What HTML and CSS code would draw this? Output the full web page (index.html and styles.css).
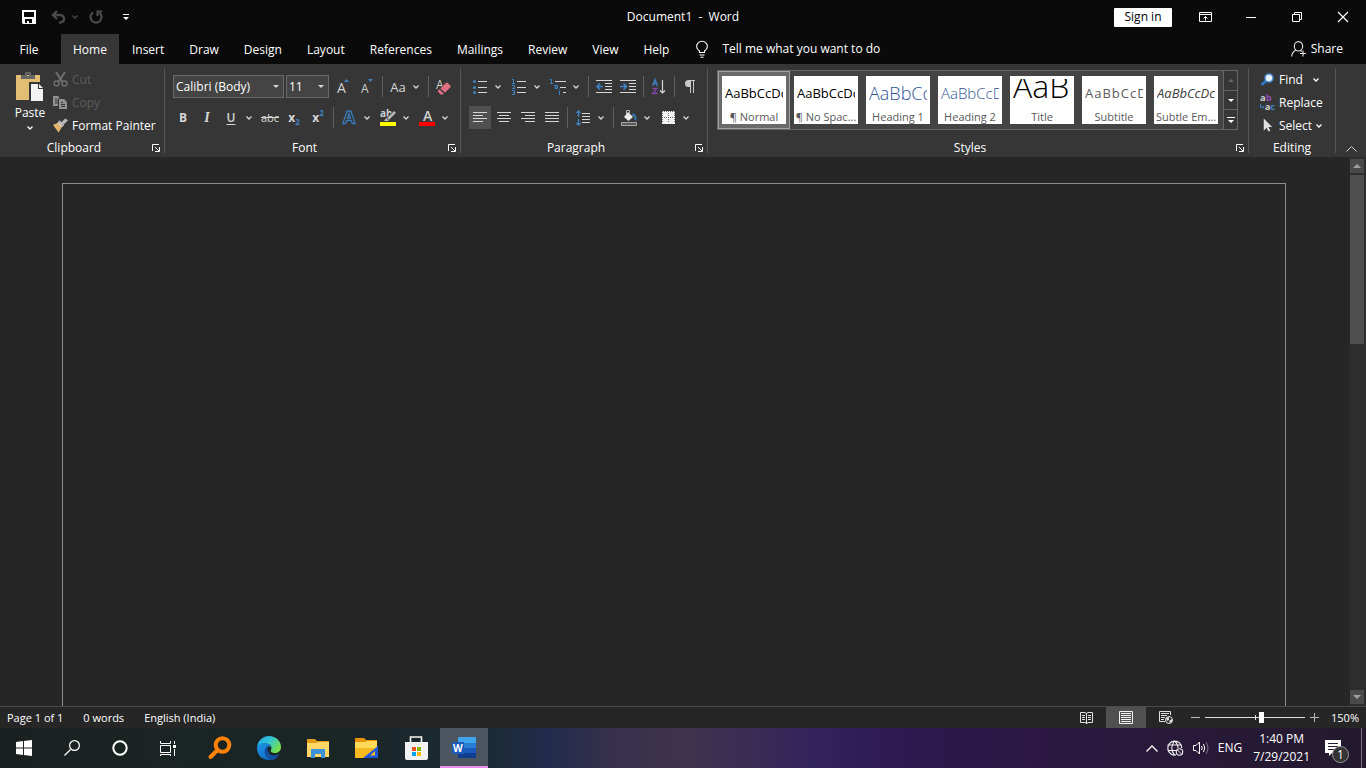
FILE: index.html
```
<!DOCTYPE html>
<html lang="en">
<head>
    <meta charset="UTF-8">
    <meta name="viewport" content="width=device-width, initial-scale=1.0">
    <title>Document1 - Word</title>
    <link rel="stylesheet" href="styles.css">
</head>
<body>

<!-- shared icons -->
<svg class="sprite" aria-hidden="true">
    <symbol id="chevron" viewBox="0 0 6 4"><path d="M0.5 0.5L3 3L5.5 0.5" fill="none" stroke="currentColor" stroke-width="1.3"/></symbol>
    <symbol id="launcher" viewBox="0 0 8 8"><path d="M0.5 7V0.5H7M3 3L7 7M7.5 3V7.5H3" fill="none" stroke="currentColor"/></symbol>
</svg>

<header class="title-bar">
    <div class="quick-access">
        <button class="qa-save" aria-label="Save">
            <svg width="14" height="14" viewBox="0 0 14 14"><path fill="#fff" fill-rule="evenodd" d="M0 0H14V14H1L0 13ZM2 2V7H12V2ZM3 9V13H5V11H7V13H10V9Z"/></svg>
        </button>
        <button class="qa-undo dim" aria-label="Undo">
            <svg width="15" height="14" viewBox="0 0 15 14"><path d="M6 1L2 5L6 9M2 5H9Q13 5 13 9Q13 12.500 8 12.500" fill="none" stroke="currentColor" stroke-width="2.400"/></svg>
        </button>
        <button class="qa-drop dim" aria-label="Undo history"><svg width="6" height="4"><use href="#chevron"/></svg></button>
        <button class="qa-redo dim" aria-label="Repeat">
            <svg width="14" height="14" viewBox="0 0 14 14"><path d="M4 2.500A5.500 5.500 0 1 0 10.500 2.800M13 1.500H8.500V6" fill="none" stroke="currentColor" stroke-width="2.200"/></svg>
        </button>
        <button class="qa-more" aria-label="Customize Quick Access Toolbar">
            <svg width="6" height="6" viewBox="0 0 6 6"><path fill="#fff" d="M0 0H6V1H0ZM0 3H6L3 6Z"/></svg>
        </button>
    </div>
    <div class="doc-title">Document1&nbsp; -&nbsp; Word</div>
    <div class="window-tools">
        <button class="sign-in">Sign in</button>
        <button class="win-btn" aria-label="Ribbon Display Options">
            <svg width="13" height="10" viewBox="0 0 13 10"><path d="M0.500 0.500H12.500V9.500H0.500ZM0.500 2.500H12.500M6.500 8.500V4.500M4.500 6.500L6.500 4.500L8.500 6.500" fill="none" stroke="#fff"/></svg>
        </button>
        <button class="win-btn" aria-label="Minimize">
            <svg width="10" height="10" viewBox="0 0 10 10"><path d="M0 5.500H10" stroke="#fff"/></svg>
        </button>
        <button class="win-btn" aria-label="Restore Down">
            <svg width="10" height="10" viewBox="0 0 10 10"><path d="M0.500 2.500H7.500V9.500H0.500ZM2.500 2V0.500H9.500V7.500H8" fill="none" stroke="#fff"/></svg>
        </button>
        <button class="win-btn" aria-label="Close">
            <svg width="10" height="10" viewBox="0 0 10 10"><path d="M0 0L10 10M10 0L0 10" stroke="#fff" stroke-width="1.200"/></svg>
        </button>
    </div>
</header>

<nav class="tabs">
    <button class="tab file">File</button>
    <button class="tab active">Home</button>
    <button class="tab">Insert</button>
    <button class="tab">Draw</button>
    <button class="tab">Design</button>
    <button class="tab">Layout</button>
    <button class="tab">References</button>
    <button class="tab">Mailings</button>
    <button class="tab">Review</button>
    <button class="tab">View</button>
    <button class="tab">Help</button>
    <button class="tell-me">
        <svg width="12" height="17" viewBox="0 0 12 17"><path d="M3.500 11.500V10Q0.600 8 0.600 5.500A5.200 5 0 0 1 11.400 5.500Q11.400 8 8.500 10V11.500ZM3.500 14H8.500M4.500 16.200H7.500" fill="none" stroke="#fff" stroke-width="1.100"/></svg>
        Tell me what you want to do
    </button>
    <button class="share">
        <svg width="16" height="16" viewBox="0 0 16 16"><path d="M7.500 0.600A4.200 4.700 0 0 1 7.500 10A4.200 4.700 0 0 1 7.500 0.600M5 9Q1 11 0.600 15.500M9.500 9.500L10.500 10.500M12 9.500V15.500M9 12.500H15" fill="none" stroke="#e8e8e8" stroke-width="1.100"/></svg>
        Share
    </button>
</nav>

<section class="ribbon">
    <div class="group clipboard">
        <div class="group-body">
            <button class="paste">
                <svg width="28" height="30" viewBox="0 0 28 30">
                    <path fill="#e2bd74" d="M0 3H24V28H0Z"/>
                    <path fill="#666" d="M5 3H9V1Q9 0 10 0H14Q15 0 15 1V3H19V7H5ZM11 2V4H13V2Z"/>
                    <path fill="#363636" d="M13 10H24L28 14V30H13Z"/>
                    <path fill="#f2f2f2" d="M15 12H22V17H27V29H15ZM23 12L27 16H23Z"/>
                </svg>
                Paste
                <svg width="6" height="4"><use href="#chevron"/></svg>
            </button>
            <div class="command-list">
                <button class="command" disabled>
                    <svg width="15" height="15" viewBox="0 0 15 15"><path d="M3 0L9.500 10M12 0L5.500 10" stroke="#707070" stroke-width="2"/><circle cx="3.500" cy="11.500" r="2.500" fill="none" stroke="#707070" stroke-width="1.400"/><circle cx="11.500" cy="11.500" r="2.500" fill="none" stroke="#707070" stroke-width="1.400"/></svg>
                    Cut
                </button>
                <button class="command" disabled>
                    <svg width="15" height="15" viewBox="0 0 15 15"><path fill="#909090" d="M0 1H5L8 4V11H0Z"/><path d="M2 4H4M2 6H5M2 8H5" stroke="#363636"/><path fill="#909090" stroke="#363636" d="M5.500 3.500H11L14.500 7V14.500H5.500Z"/><path d="M8 7.500H10M8 9.500H12M8 11.500H12" stroke="#363636"/></svg>
                    Copy
                </button>
                <button class="command">
                    <svg width="15" height="15" viewBox="0 0 16 15"><path fill="#e2b46c" d="M0 7L4 5L9 10L6 15Z"/><path fill="#f6dcae" d="M4 5L6 4L10 8L9 10Z"/><path fill="#b8b8b8" d="M5 4L7 2L12 7L10 9ZM9 4L13 0L16 2L11 7Z"/></svg>
                    Format Painter
                </button>
            </div>
        </div>
        <div class="group-label"><span>Clipboard</span><button class="launch" aria-label="Clipboard settings"><svg width="8" height="8"><use href="#launcher"/></svg></button></div>
    </div>

    <div class="group">
        <div class="group-body rows">
            <div class="row">
                <select class="font-name" aria-label="Font"><option>Calibri (Body)</option></select>
                <select class="font-size" aria-label="Font size"><option>11</option></select>
                <button class="btn" aria-label="Increase font size"><svg width="14" height="15" viewBox="0 0 14 15"><text x="1" y="14" class="glyph g14">A</text><path fill="#3e83c6" d="M8 3L10.500 0L13 3Z"/></svg></button>
                <button class="btn" aria-label="Decrease font size"><svg width="14" height="15" viewBox="0 0 14 15"><text x="1" y="14" class="glyph g12">A</text><path fill="#3e83c6" d="M8 0H13L10.500 3Z"/></svg></button>
                <i class="sep"></i>
                <button class="btn case" aria-label="Change case">Aa</button>
                <button class="drop" aria-label="Case options"><svg width="6" height="4"><use href="#chevron"/></svg></button>
                <i class="sep"></i>
                <button class="btn" aria-label="Clear formatting"><svg width="16" height="16" viewBox="0 0 16 16"><text x="0" y="10" class="glyph g12">A</text><path fill="#de6f83" stroke="#363636" stroke-width="0.600" d="M4 9.500L10 3.500L11 3L15 7V8L9 14Z"/><path fill="#de6f83" d="M1.500 12L3.300 10.300L7.800 14.800L7 15.500H4.500Z"/></svg></button>
            </div>
            <div class="row">
                <button class="btn bold" aria-label="Bold">B</button>
                <button class="btn italic" aria-label="Italic">I</button>
                <button class="btn underline" aria-label="Underline">U</button>
                <button class="drop" aria-label="Underline style"><svg width="6" height="4"><use href="#chevron"/></svg></button>
                <button class="btn strike" aria-label="Strikethrough">abc</button>
                <button class="btn script" aria-label="Subscript">x<sub>2</sub></button>
                <button class="btn script" aria-label="Superscript">x<sup>2</sup></button>
                <i class="sep"></i>
                <button class="btn" aria-label="Text effects"><svg width="14" height="15" viewBox="0 0 14 15"><path d="M0.800 13.500L5.200 1H8.800L13.200 13.500H10.300L9.200 10.500H4.800L3.700 13.500ZM5.500 8H8.500L7 3.500Z" fill="none" stroke="#3778b8" stroke-width="1.300"/></svg></button>
                <button class="drop" aria-label="Effects"><svg width="6" height="4"><use href="#chevron"/></svg></button>
                <button class="btn" aria-label="Text highlight colour"><svg width="16" height="16" viewBox="0 0 16 16"><text x="0" y="7" class="glyph g10 heavy">ab</text><path stroke="#363636" stroke-width="4" d="M15 2L8 9"/><path stroke="#b8b8b8" stroke-width="2.500" d="M15 2L8 9"/><path fill="#b8b8b8" d="M6 8L9 11H4Z"/><path fill="#ff0" d="M0 12H16V16H0Z"/></svg></button>
                <button class="drop" aria-label="Highlight colours"><svg width="6" height="4"><use href="#chevron"/></svg></button>
                <button class="btn" aria-label="Font colour"><svg width="16" height="16" viewBox="0 0 16 16"><text x="4" y="11" class="glyph g14 semi">A</text><path fill="#f00" d="M0 12H16V16H0Z"/></svg></button>
                <button class="drop" aria-label="Font colours"><svg width="6" height="4"><use href="#chevron"/></svg></button>
            </div>
        </div>
        <div class="group-label"><span>Font</span><button class="launch" aria-label="Font settings"><svg width="8" height="8"><use href="#launcher"/></svg></button></div>
    </div>

    <div class="group paragraph">
        <div class="group-body rows">
            <div class="row">
                <button class="btn" aria-label="Bullets"><svg width="14" height="15" viewBox="0 0 14 15"><path d="M5 2.500H14M5 8.500H14M5 13.500H14" stroke="#d6d6d6"/><g fill="#3e83c6"><circle cx="1.500" cy="2.500" r="1.500"/><circle cx="1.500" cy="8.500" r="1.500"/><circle cx="1.500" cy="13.500" r="1.500"/></g></svg></button>
                <button class="drop" aria-label="Bullet styles"><svg width="6" height="4"><use href="#chevron"/></svg></button>
                <button class="btn" aria-label="Numbering"><svg width="14" height="16" viewBox="0 0 14 16"><path d="M5 2.500H14M5 8.500H14M5 13.500H14" stroke="#d6d6d6"/><path d="M0 0.500H1.500V4M0 4.500H3M0 6.500H2.500V8L0.500 9.500H3M0 11.500H2.500V15.500H0M1 13.500H2.500" fill="none" stroke="#3e83c6"/></svg></button>
                <button class="drop" aria-label="Number styles"><svg width="6" height="4"><use href="#chevron"/></svg></button>
                <button class="btn" aria-label="Multilevel list"><svg width="16" height="16" viewBox="0 0 16 16"><path d="M5 2.500H16M10 8.500H16M13 13.500H16" stroke="#d6d6d6"/><path d="M0 0.500H1.500V4M0 4.500H3M4 6.500H7.500V9.500H5V8H7M9.500 10V11M8.500 12.500H9.500V16" fill="none" stroke="#3e83c6"/></svg></button>
                <button class="drop" aria-label="Multilevel styles"><svg width="6" height="4"><use href="#chevron"/></svg></button>
                <i class="sep"></i>
                <button class="btn" aria-label="Decrease indent"><svg width="16" height="13" viewBox="0 0 16 13"><path d="M0 0.500H16M9 3.500H16M9 6.500H16M9 9.500H16M0 12.500H16" stroke="#d6d6d6"/><path d="M1 6.500H7M4 3.500L1 6.500L4 9.500" fill="none" stroke="#3e83c6" stroke-width="1.600"/></svg></button>
                <button class="btn" aria-label="Increase indent"><svg width="16" height="13" viewBox="0 0 16 13"><path d="M0 0.500H16M9 3.500H16M9 6.500H16M9 9.500H16M0 12.500H16" stroke="#d6d6d6"/><path d="M0 6.500H6M3.500 3.500L6.500 6.500L3.500 9.500" fill="none" stroke="#3e83c6" stroke-width="1.600"/></svg></button>
                <i class="sep"></i>
                <button class="btn" aria-label="Sort"><svg width="14" height="16" viewBox="0 0 14 16"><path d="M0.500 7L3 0.500L5.500 7M1.500 4.500H4.500" fill="none" stroke="#3e83c6" stroke-width="1.300"/><path d="M0.500 9.500H5L0.700 14.500H5.500" fill="none" stroke="#8445a8" stroke-width="1.300"/><path d="M10.500 1V14M8 11.500L10.500 14L13 11.500" fill="none" stroke="#d6d6d6" stroke-width="1.200"/></svg></button>
                <i class="sep"></i>
                <button class="btn" aria-label="Show paragraph marks"><svg width="10" height="13" viewBox="0 0 10 13"><path fill="#c8c8c8" d="M3.500 0H10V1H9V13H8V1H6V13H5V7H3.500A3.500 3.500 0 0 1 3.500 0Z"/></svg></button>
            </div>
            <div class="row">
                <button class="btn on" aria-label="Align left"><svg width="14" height="11" viewBox="0 0 14 11"><path d="M0 0.500H14M0 3.500H10M0 6.500H14M0 9.500H10" stroke="#d6d6d6"/></svg></button>
                <button class="btn" aria-label="Centre"><svg width="14" height="11" viewBox="0 0 14 11"><path d="M0 0.500H14M2 3.500H12M0 6.500H14M2 9.500H12" stroke="#d6d6d6"/></svg></button>
                <button class="btn" aria-label="Align right"><svg width="14" height="11" viewBox="0 0 14 11"><path d="M0 0.500H14M4 3.500H14M0 6.500H14M4 9.500H14" stroke="#d6d6d6"/></svg></button>
                <button class="btn" aria-label="Justify"><svg width="14" height="11" viewBox="0 0 14 11"><path d="M0 0.500H14M0 3.500H14M0 6.500H14M0 9.500H14" stroke="#d6d6d6"/></svg></button>
                <i class="sep"></i>
                <button class="btn" aria-label="Line spacing"><svg width="14" height="16" viewBox="0 0 14 16"><path d="M2.500 1V7M0.500 3L2.500 1L4.500 3M2.500 9V15M0.500 13L2.500 15L4.500 13" fill="none" stroke="#3e83c6" stroke-width="1.400"/><path d="M6 3.500H14M6 6.500H14M6 9.500H14M6 12.500H14" stroke="#d6d6d6"/></svg></button>
                <button class="drop" aria-label="Spacing options"><svg width="6" height="4"><use href="#chevron"/></svg></button>
                <i class="sep"></i>
                <button class="btn" aria-label="Shading"><svg width="16" height="16" viewBox="0 0 16 16"><path fill="#ececec" d="M7 2L12 7L7.500 11L3 7Z"/><path d="M5.500 4V0.500H8.500V3" fill="none" stroke="#b8b8b8"/><path d="M11 4.500Q15 4 14.500 10.500" fill="none" stroke="#3778b8" stroke-width="2"/><path d="M0.500 12.500H15.500V15.500H0.500Z" fill="#5a5a5a" stroke="#a8a8a8"/></svg></button>
                <button class="drop" aria-label="Shading colours"><svg width="6" height="4"><use href="#chevron"/></svg></button>
                <button class="btn" aria-label="Borders"><svg width="13" height="13" viewBox="0 0 13 13"><path fill="#f2f2f2" d="M0 0H13V13H0Z"/><path d="M0.500 0V12M12.500 0V12M6.500 0V12M0 0.500H13M0 6.500H13" stroke="#6a6a6a" stroke-dasharray="1 1"/></svg></button>
                <button class="drop" aria-label="Border styles"><svg width="6" height="4"><use href="#chevron"/></svg></button>
            </div>
        </div>
        <div class="group-label"><span>Paragraph</span><button class="launch" aria-label="Paragraph settings"><svg width="8" height="8"><use href="#launcher"/></svg></button></div>
    </div>

    <div class="group styles">
        <div class="gallery">
            <div class="gallery-items">
                <button class="style-item selected"><span class="card"><span class="sample">AaBbCcDc</span><span class="style-name">¶ Normal</span></span></button>
                <button class="style-item"><span class="card"><span class="sample">AaBbCcDc</span><span class="style-name">¶ No Spac...</span></span></button>
                <button class="style-item"><span class="card"><span class="sample heading1">AaBbCc</span><span class="style-name">Heading 1</span></span></button>
                <button class="style-item"><span class="card"><span class="sample heading2">AaBbCcD</span><span class="style-name">Heading 2</span></span></button>
                <button class="style-item"><span class="card"><span class="sample title">AaB</span><span class="style-name">Title</span></span></button>
                <button class="style-item"><span class="card"><span class="sample subtitle">AaBbCcD</span><span class="style-name">Subtitle</span></span></button>
                <button class="style-item"><span class="card"><span class="sample emphasis">AaBbCcDc</span><span class="style-name">Subtle Em...</span></span></button>
            </div>
            <div class="gallery-scroll">
                <button disabled aria-label="Previous row"><svg width="6" height="3" viewBox="0 0 6 3"><path fill="#666" d="M0 3L3 0L6 3Z"/></svg></button>
                <button aria-label="Next row"><svg width="6" height="3" viewBox="0 0 6 3"><path fill="#fff" d="M0 0H6L3 3Z"/></svg></button>
                <button aria-label="More styles"><svg width="8" height="6" viewBox="0 0 8 6"><path fill="#fff" d="M0 0H8V1H0ZM1 3H7L4 6Z"/></svg></button>
            </div>
        </div>
        <div class="group-label"><span>Styles</span><button class="launch" aria-label="Styles pane"><svg width="8" height="8"><use href="#launcher"/></svg></button></div>
    </div>

    <div class="group editing">
        <div class="command-list">
            <button class="command">
                <svg width="15" height="14" viewBox="0 0 15 14"><path d="M1.500 12L7 7" stroke="#2f79c4" stroke-width="3"/><circle cx="9" cy="5" r="4" fill="#e6f2fb" stroke="#4a90d2" stroke-width="1.500"/></svg>
                Find <svg class="after" width="6" height="4"><use href="#chevron"/></svg>
            </button>
            <button class="command">
                <svg width="15" height="16" viewBox="0 0 16 16"><text x="0" y="6" class="glyph g10 heavy">a</text><text x="6" y="6" class="glyph g10 heavy purple">b</text><text x="5" y="15" class="glyph g10 heavy">a</text><text x="11" y="15" class="glyph g10 heavy blue">c</text><path d="M0.500 9V12.500H4M2.500 11L4 12.500L2.500 14" fill="none" stroke="#3e83c6"/></svg>
                Replace
            </button>
            <button class="command">
                <svg width="15" height="15" viewBox="0 0 16 15"><path fill="#e0e0e0" d="M4 0L13 9H9L11 13L9 14L7 10L4 13Z"/></svg>
                Select<svg width="6" height="4"><use href="#chevron"/></svg>
            </button>
        </div>
        <div class="group-label"><span>Editing</span></div>
    </div>
    <button class="collapse" aria-label="Collapse the Ribbon"><svg width="11" height="6" viewBox="0 0 11 6"><path d="M0.500 5.500L5.500 0.500L10.500 5.500" fill="none" stroke="#d6d6d6"/></svg></button>
</section>

<main class="workspace">
    <div class="canvas"><div class="page"></div></div>
    <div class="scrollbar">
        <button class="scroll-arrow" aria-label="Scroll up"><svg width="8" height="4" viewBox="0 0 8 4"><path fill="#a0a0a0" d="M0 4L4 0L8 4Z"/></svg></button>
        <div class="scroll-track"><div class="scroll-thumb"></div></div>
        <button class="scroll-arrow" aria-label="Scroll down"><svg width="8" height="4" viewBox="0 0 8 4"><path fill="#a0a0a0" d="M0 0H8L4 4Z"/></svg></button>
    </div>
</main>

<footer class="status-bar">
    <span>Page 1 of 1</span>
    <span>0 words</span>
    <span>English (India)</span>
    <div class="view-tools">
        <button class="view" aria-label="Read Mode"><svg width="13" height="12" viewBox="0 0 13 12"><path d="M0.500 0.500H5L6.500 1.500L8 0.500H12.500V10.500H8L6.500 11.500L5 10.500H0.500ZM6.500 1V12M2 3.500H5M2 5.500H5M2 7.500H5M8 3.500H11M8 5.500H11M8 7.500H11" fill="none" stroke="#e0e0e0"/></svg></button>
        <button class="view current" aria-label="Print Layout"><svg width="14" height="13" viewBox="0 0 14 13"><path d="M0.500 0.500H13.500V12.500H0.500ZM2 2.500H12M2 4.500H12M2 6.500H12M2 8.500H12M2 10.500H12" fill="none" stroke="#f2f2f2"/></svg></button>
        <button class="view" aria-label="Web Layout"><svg width="14" height="13" viewBox="0 0 14 13"><path d="M6 10.500H0.500V0.500H11.500V4M2 2.500H10M2 4.500H8M2 6.500H6M2 8.500H5" fill="none" stroke="#e0e0e0"/><circle cx="10" cy="9" r="3.500" fill="#262626" stroke="#e0e0e0"/><path fill="#e0e0e0" d="M7 7L10 6V9L8 10ZM10 10L13 8V11L11 12Z"/></svg></button>
        <button class="zoom-btn" aria-label="Zoom out"><svg width="9" height="9" viewBox="0 0 9 9"><path d="M0 4.500H9" stroke="#b8b8b8"/></svg></button>
        <input class="zoom-slider" type="range" min="0" max="100" value="57" aria-label="Zoom">
        <button class="zoom-btn" aria-label="Zoom in"><svg width="9" height="9" viewBox="0 0 9 9"><path d="M0 4.500H9M4.500 0V9" stroke="#b8b8b8"/></svg></button>
        <button class="zoom-value">150%</button>
    </div>
</footer>

<div class="taskbar">
    <button class="task" aria-label="Start"><svg width="16" height="16" viewBox="0 0 16 16"><path fill="#fff" d="M0 2L7 1V7.500H0ZM8 1L16 0V7.500H8ZM0 8.500H7V15L0 14ZM8 8.500H16V16L8 15Z"/></svg></button>
    <button class="task" aria-label="Search"><svg width="16" height="16" viewBox="0 0 16 16"><path d="M0.500 15.500L6.500 9.500" stroke="#fff" stroke-width="1.300"/><circle cx="10.500" cy="5.500" r="4.900" fill="none" stroke="#fff" stroke-width="1.200"/></svg></button>
    <button class="task" aria-label="Cortana"><svg width="16" height="16" viewBox="0 0 16 16"><circle cx="8" cy="8" r="6.700" fill="none" stroke="#fff" stroke-width="2"/></svg></button>
    <button class="task" aria-label="Task View"><svg width="16" height="15" viewBox="0 0 16 15"><path d="M0.500 0V2.500H10.500V0M0.500 4.500H10.500V11.500H0.500ZM0.500 15V13.500H10.500V15M14.500 0V3M14.500 8V15" fill="none" stroke="#fff"/><path fill="#fff" d="M13 4H16V7H13Z"/></svg></button>
    <div class="pinned">
        <button class="task" aria-label="Everything"><svg width="24" height="24" viewBox="0 0 24 24"><path d="M2.500 21L9 14.500" stroke="#ff8206" stroke-width="4" stroke-linecap="round"/><circle cx="14.500" cy="9" r="6.800" fill="none" stroke="#ff8206" stroke-width="4"/></svg></button>
        <button class="task" aria-label="Microsoft Edge">
            <svg width="24" height="24" viewBox="0 0 24 24">
                <defs>
                    <linearGradient id="edge-top" x1="0" y1="0" x2="1" y2="0.600"><stop offset="0" stop-color="#249ee5"/><stop offset="0.500" stop-color="#31c5d5"/><stop offset="1" stop-color="#76e04a"/></linearGradient>
                    <linearGradient id="edge-low" x1="0" y1="0" x2="1" y2="1"><stop offset="0" stop-color="#1c9be8"/><stop offset="1" stop-color="#0a59b5"/></linearGradient>
                </defs>
                <path fill="url(#edge-top)" d="M0 11C1 4 6 0 12 0C19 0 24 5 24 11C24 15 21 17 18 17C15 17 13 16 14 14C17 8 6 4 0 11Z"/>
                <path fill="url(#edge-low)" d="M0 12C1 6 12 5 14 11C10 9 7 13 10 17C13 21 18 21 22 18C19 23 15 24 12 24C5 24 0 19 0 12Z"/>
                <path fill="#124f9f" d="M9 11C6 16 8 22 14 24C18 24 21 21 22 18C18 20 14 20 12 17C10 15 10 12 12 10Z"/>
            </svg>
        </button>
        <button class="task" aria-label="File Explorer"><svg width="22" height="19" viewBox="0 0 22 19"><path fill="#e39b16" d="M0 0H8L10 2H22V8H0Z"/><path fill="#ffd768" d="M0 4H10L11 3H22V18H0Z"/><path fill="#3b92d8" d="M4 10H18V19H14V15H8V19H4Z"/></svg></button>
        <button class="task" aria-label="Folder tools"><svg width="24" height="21" viewBox="0 0 24 21"><path fill="#e69308" d="M0 0H9L11 2H22V8H0Z"/><path fill="#ffda58" d="M0 4H10L12 3H22V11H0Z"/><path fill="#f8b820" d="M0 10H22V20H0Z"/><path fill="#1e58d8" fill-rule="evenodd" d="M8 20L23 8V20ZM15 17.500H20V13Z"/></svg></button>
        <button class="task" aria-label="Microsoft Store"><svg width="24" height="24" viewBox="0 0 24 24"><path d="M6.500 7V1H17.500V7" fill="none" stroke="#f6f6f6" stroke-width="1.600"/><path fill="#f2f2f2" d="M1 6H24V22Q24 24 22 24H3Q1 24 1 22Z"/><path fill="#f25022" d="M8 11H12V15H8Z"/><path fill="#7fba00" d="M13 11H17V15H13Z"/><path fill="#00a4ef" d="M8 16H12V20H8Z"/><path fill="#ffb900" d="M13 16H17V20H13Z"/></svg></button>
        <button class="task running" aria-label="Word"><svg width="24" height="21" viewBox="0 0 24 21"><path fill="#41a5ee" d="M6 0H24V6H6Z"/><path fill="#2b7cd3" d="M6 6H24V11H6Z"/><path fill="#185abd" d="M6 11H24V16H6Z"/><path fill="#103f91" d="M6 16H24V21H6Z"/><path fill="#1b5abb" d="M0 5H12V17H0Z"/><text x="1" y="15" class="word-letter">W</text></svg></button>
    </div>
    <div class="tray">
        <button aria-label="Show hidden icons"><svg width="12" height="7" viewBox="0 0 12 7"><path d="M0.500 6.500L6 1L11.500 6.500" fill="none" stroke="#fff" stroke-width="1.300"/></svg></button>
        <button aria-label="Network"><svg width="17" height="16" viewBox="0 0 17 16"><path d="M9 15A7 7 0 1 1 14.800 8M0.500 5H14M0.500 10.500H9M7.500 1Q2 8 7.500 15M7.500 1Q11 4 11 8" fill="none" stroke="#f0f0f0" stroke-width="1.100"/><circle cx="12.500" cy="12" r="3.200" fill="none" stroke="#f0f0f0" stroke-width="1.100"/><path d="M10.500 10L14.500 14" stroke="#f0f0f0"/></svg></button>
        <button aria-label="Volume"><svg width="16" height="14" viewBox="0 0 16 14"><path d="M0.500 4.500H3L6.500 1V13L3 9.500H0.500ZM8.500 5Q10 7 8.500 9M10.500 3Q13 7 10.500 11" fill="none" stroke="#fff"/><path d="M13 1Q17 7 13 13" fill="none" stroke="#7a7288"/></svg></button>
        <button class="lang">ENG</button>
        <button class="clock">1:40 PM<br>7/29/2021</button>
        <button class="notices" aria-label="Notifications">
            <svg width="16" height="16" viewBox="0 0 16 16"><path fill="#fff" d="M0 0H16V13H7L4 16V13H0Z"/><path d="M3 3.500H13M3 6.500H13M3 9.500H9" stroke="#2a1a3c"/></svg>
            <span class="badge">1</span>
        </button>
    </div>
    <button class="show-desktop" aria-label="Show desktop"></button>
</div>

</body>
</html>
```
FILE: styles.css
```
* {
    box-sizing: border-box;
}
body {
    margin: 0;
    height: 100vh;
    display: flex;
    flex-direction: column;
    overflow: hidden;
    font-family: "Open Sans", "Noto Sans", sans-serif;
    font-size: 12px;
    line-height: 16px;
    color: #fff;
    background-color: #262626;
}
button, select {
    font: inherit;
    color: inherit;
    background: none;
    border: 0;
    padding: 0;
    margin: 0;
}
button {
    display: flex;
    align-items: center;
    justify-content: center;
    white-space: nowrap;
}
svg {
    flex: none;
    overflow: visible;
}
.sprite {
    display: none;
}

/* title bar */
.title-bar {
    display: grid;
    grid-template-columns: 1fr auto 1fr;
    align-items: center;
    height: 34px;
    background-color: #0a0a0a;
}
.quick-access {
    display: flex;
    align-items: center;
    padding-left: 17px;
}
.quick-access button {
    height: 24px;
    width: 24px;
}
.quick-access .qa-undo {
    margin-left: 5px;
}
.quick-access .qa-drop {
    width: 10px;
}
.quick-access .qa-redo {
    margin-left: 4px;
}
.quick-access .qa-more {
    margin-left: 6px;
}
.dim {
    color: #4a4a4a;
}
.window-tools {
    display: flex;
    align-items: center;
    justify-content: flex-end;
}
.sign-in {
    width: 58px;
    height: 19px;
    margin-right: 10px;
    color: #000;
    background-color: #fff;
    border-radius: 1px;
}
.win-btn {
    width: 46px;
    height: 30px;
}

/* ribbon tabs */
.tabs {
    display: flex;
    height: 30px;
    background-color: #0a0a0a;
}
.tab {
    padding: 2px 12px 0;
    margin-right: 1px;
}
.tab.file {
    width: 58px;
    margin-right: 3px;
}
.tab.active {
    background-color: #363636;
}
.tell-me {
    gap: 14px;
    margin-left: 14px;
}
.share {
    gap: 4px;
    margin-left: auto;
    margin-right: 23px;
}

/* ribbon */
.ribbon {
    display: flex;
    height: 93px;
    padding: 4px 0;
    background-color: #363636;
}
.group {
    display: flex;
    flex-direction: column;
    border-right: 1px solid #555;
}
.group-body {
    display: flex;
}
.group-label {
    display: flex;
    align-items: center;
    height: 10px;
    margin-top: auto;
}
.group-label span {
    flex: 1;
    text-align: center;
}
.launch {
    width: 16px;
    height: 10px;
}
.clipboard {
    width: 165px;
}
.paste {
    flex-direction: column;
    justify-content: flex-start;
    gap: 3px;
    width: 58px;
    padding: 4px 0 0 2px;
}
.paste svg + svg {
    margin-top: 2px;
}
.command-list {
    display: flex;
    flex-direction: column;
    align-items: flex-start;
}
.command {
    height: 23px;
    gap: 4px;
}
.command:disabled {
    color: #5c5c5c;
}
.clipboard .command-list {
    margin-left: -5px;
}
.rows {
    flex-direction: column;
    gap: 8px;
    padding: 7px 4px 0 6px;
}
.paragraph .rows {
    padding: 7px 5px 0 7px;
}
.row {
    display: flex;
    align-items: center;
    height: 23px;
}
.btn {
    width: 24px;
    height: 23px;
    color: #d6d6d6;
}
.btn.on {
    background-color: #505050;
    background-clip: padding-box;
    border: solid transparent;
    border-width: 0 1px;
}
.drop {
    width: 12px;
    height: 23px;
    margin-right: 3px;
    color: #d6d6d6;
}
.sep {
    width: 1px;
    height: 21px;
    margin: 0 3px;
    background-color: #5e5e5e;
}
select {
    appearance: none;
    height: 23px;
    padding: 0 2px;
    margin-left: 2px;
    border: 1px solid #6a6a6a;
    background: #444 url("data:image/svg+xml,%3Csvg xmlns='http://www.w3.org/2000/svg' width='6' height='3'%3E%3Cpath fill='%23d6d6d6' d='M0 0H6L3 3Z'/%3E%3C/svg%3E") no-repeat right 4px center;
}
.font-name {
    width: 111px;
}
.font-size {
    width: 43px;
    margin-right: 2px;
}
.case {
    font-size: 13px;
}
.bold {
    font-weight: 700;
}
.italic {
    font-family: "Liberation Serif", serif;
    font-size: 14px;
    font-style: italic;
    font-weight: 700;
}
.underline {
    font-weight: 600;
    text-decoration: underline;
    text-underline-offset: 2px;
}
.strike {
    font-size: 11px;
    text-decoration: line-through;
}
.script {
    font-weight: 700;
}
.script sub, .script sup {
    margin: 3px 0;
    font-size: 8px;
    line-height: 8px;
    color: #3e83c6;
}
.script sub {
    align-self: flex-end;
}
.script sup {
    align-self: flex-start;
}
.glyph {
    fill: #d0d0d0;
}
.g10 {
    font-size: 10px;
}
.g12 {
    font-size: 12px;
}
.g14 {
    font-size: 14px;
}
.semi {
    font-weight: 600;
}
.heavy {
    font-weight: 700;
}
.purple {
    fill: #8f4fb5;
}
.blue {
    fill: #3e83c6;
}

/* styles gallery */
.styles {
    flex: 1;
    min-width: 0;
}
.gallery {
    display: flex;
    height: 60px;
    margin: 2px 10px 0 9px;
    border: 1px solid #666;
    background-color: #444;
}
.gallery-items {
    flex: 1;
    display: flex;
    overflow: hidden;
}
.style-item {
    flex: none;
    width: 72px;
    height: 58px;
}
.style-item.selected {
    background-color: #6a6a6a;
    border: 1px solid #a0a0a0;
}
.card {
    display: flex;
    flex-direction: column;
    width: 64px;
    height: 48px;
    overflow: hidden;
    color: #000;
    background-color: #fff;
}
.sample {
    height: 30px;
    margin: 3px 3px 0;
    font-size: 13px;
    line-height: 28px;
    text-align: left;
    overflow: hidden;
}
.heading1 {
    font-size: 18px;
    font-weight: 300;
    color: #2f5496;
}
.heading2 {
    font-size: 15px;
    font-weight: 300;
    color: #2f5496;
}
.title {
    font-size: 32px;
    font-weight: 300;
    line-height: 14px;
}
.subtitle {
    letter-spacing: 1px;
    color: #5a5a5a;
}
.emphasis {
    font-style: italic;
    color: #404040;
}
.style-name {
    font-size: 11px;
    line-height: 15px;
    color: #595959;
    text-align: center;
}
.gallery-scroll {
    display: flex;
    flex-direction: column;
    width: 14px;
    border-left: 1px solid #666;
    background-color: #363636;
}
.gallery-scroll button {
    flex: 1;
}
.gallery-scroll button + button {
    border-top: 1px solid #666;
}
.editing {
    width: 87px;
}
.editing .command-list {
    padding-left: 11px;
}
.after {
    margin-left: 6px;
}
.collapse {
    width: 30px;
    align-self: flex-end;
    height: 8px;
}

/* document */
.workspace {
    flex: 1;
    display: flex;
    min-height: 0;
}
.canvas {
    flex: 1;
    display: flex;
    padding: 26px 64px 0 62px;
}
.page {
    flex: 1;
    border: 1px solid #8c8c8c;
    border-bottom: 0;
}
.scrollbar {
    display: flex;
    flex-direction: column;
    gap: 2px;
    width: 16px;
    padding: 2px 2px 2px 0;
    background-color: #2d2d2d;
}
.scroll-arrow {
    height: 14px;
    background-color: #4a4a4a;
}
.scroll-track {
    flex: 1;
}
.scroll-thumb {
    height: 33%;
    background-color: #4f4f4f;
}

/* status bar */
.status-bar {
    display: flex;
    align-items: center;
    gap: 20px;
    height: 22px;
    padding-left: 7px;
    font-size: 11px;
    border-top: 1px solid #4a4a4a;
    background-color: #262626;
}
.view-tools {
    display: flex;
    align-items: center;
    height: 21px;
    margin-left: auto;
}
.view {
    width: 40px;
    height: 21px;
}
.view.current {
    background-color: #505050;
}
.zoom-btn {
    width: 19px;
    height: 21px;
}
.zoom-slider {
    appearance: none;
    width: 100px;
    height: 21px;
    margin: 0;
    background: linear-gradient(#e0e0e0, #e0e0e0) no-repeat center / 100% 1px, linear-gradient(#e0e0e0, #e0e0e0) no-repeat center / 1px 5px;
}
.zoom-slider::-webkit-slider-thumb {
    appearance: none;
    width: 5px;
    height: 11px;
    background-color: #fff;
}
.zoom-value {
    width: 42px;
}

/* taskbar */
.taskbar {
    display: flex;
    height: 40px;
    background: linear-gradient(90deg, #1b2120 0%, #1a2526 25%, #1b2b36 36%, #212c4c 40%, #37304c 45%, #3f334e 50%, #382b56 56%, #31225e 60%, #2f1c56 64%, #2c1848 70%, #2b183e 80%, #231a2e 100%);
}
.task {
    width: 48px;
    height: 40px;
}
.pinned {
    display: flex;
    padding-left: 3px;
}
.pinned .task {
    width: 49px;
}
.pinned .running {
    width: 48px;
    background-color: #4b5661;
    border-bottom: 2px solid #e88df0;
}
.word-letter {
    fill: #fff;
    font-size: 10px;
    font-weight: 700;
}
.tray {
    display: flex;
    align-items: center;
    gap: 9px;
    margin-left: auto;
}
.clock {
    margin-left: 2px;
    line-height: 18px;
}
.notices {
    position: relative;
    margin-left: 6px;
}
.badge {
    position: absolute;
    left: 7px;
    top: 6px;
    width: 17px;
    height: 17px;
    line-height: 15px;
    border: 1px solid #999;
    border-radius: 50%;
    background-color: #333;
}
.show-desktop {
    width: 5px;
    height: 40px;
    margin-left: 20px;
    border-left: 1px solid #77707f;
}
```
